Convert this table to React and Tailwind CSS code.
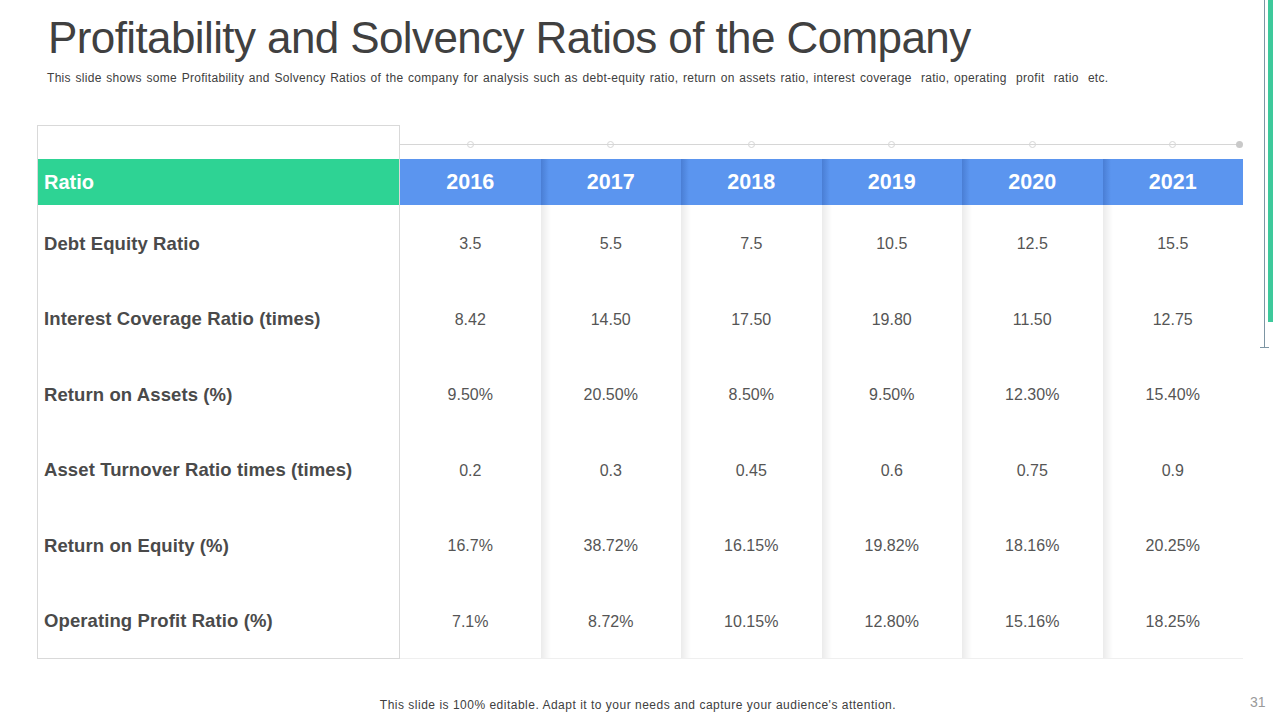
import React from "react";

const years = ["2016", "2017", "2018", "2019", "2020", "2021"];

const rows = [
    { label: "Debt Equity Ratio", values: ["3.5", "5.5", "7.5", "10.5", "12.5", "15.5"] },
    { label: "Interest Coverage Ratio (times)", values: ["8.42", "14.50", "17.50", "19.80", "11.50", "12.75"] },
    { label: "Return on Assets (%)", values: ["9.50%", "20.50%", "8.50%", "9.50%", "12.30%", "15.40%"] },
    { label: "Asset Turnover Ratio times (times)", values: ["0.2", "0.3", "0.45", "0.6", "0.75", "0.9"] },
    { label: "Return on Equity (%)", values: ["16.7%", "38.72%", "16.15%", "19.82%", "18.16%", "20.25%"] },
    { label: "Operating Profit Ratio (%)", values: ["7.1%", "8.72%", "10.15%", "12.80%", "15.16%", "18.25%"] },
];

const App = () => {
    return (
        <div className="relative w-[1280px] h-[720px] bg-white overflow-hidden font-['Liberation_Sans',Arial,sans-serif] text-[#404040]">
            {/* right edge decoration */}
            <div className="absolute top-0 left-[1264px] w-px h-[348px] bg-[#7d95a3]"></div>
            <div className="absolute top-[347px] left-[1260px] w-[9px] h-px bg-[#7d95a3]"></div>
            <div className="absolute top-0 left-[1268px] w-[5px] h-[322px] bg-[#3ec99b]"></div>

            <div className="pl-[48px] pt-[12px]">
                <h1 className="text-[44px] leading-[52px] tracking-[-0.6px]">Profitability and Solvency Ratios of the Company</h1>
                <p className="text-[12px] leading-[16px] -ml-px mt-[6px] tracking-[0.3px] [word-spacing:1px]">
                    This slide shows some Profitability and Solvency Ratios of the company for analysis such as debt-equity ratio, return on assets ratio, interest coverage&nbsp; ratio, operating&nbsp; profit&nbsp; ratio&nbsp; etc.
                </p>
            </div>

            <div className="flex ml-[37px] mt-[39px]">
                {/* left column */}
                <div className="w-[363px] border border-[#d9d9d9] flex flex-col">
                    <div className="h-[33px]"></div>
                    <div className="h-[46px] bg-[#2ed394] flex items-center pl-[6px] text-white font-bold text-[20px]">Ratio</div>
                    {rows.map((r) => (
                        <div key={r.label} className="h-[75.5px] flex items-center pl-[6px] pt-[2px] font-bold text-[18.5px] tracking-[0.1px] text-[#4a4a4a]">
                            {r.label}
                        </div>
                    ))}
                </div>

                {/* year columns */}
                <div className="flex flex-col w-[843px]">
                    <div className="relative h-[34px]">
                        <div className="absolute left-0 right-[3px] top-[19px] h-px bg-[#d6d6d6]"></div>
                        <div className="flex h-full">
                            {years.map((y) => (
                                <div key={y} className="flex-1 flex justify-center">
                                    <div className="mt-[16px] w-[7px] h-[7px] rounded-full border border-[#d6d6d6] bg-white"></div>
                                </div>
                            ))}
                        </div>
                        <div className="absolute right-0 top-[16px] w-[7px] h-[7px] rounded-full bg-[#c9c9c9]"></div>
                    </div>
                    <div className="flex">
                        {years.map((y, i) => (
                            <div key={y} className={`flex-1 flex flex-col ${i > 0 ? "bg-[linear-gradient(to_right,#ebebeb,#ffffff_10px)]" : "bg-white"}`}>
                                <div className={`h-[46px] flex items-center justify-center text-white font-bold text-[21.5px] ${i > 0 ? "bg-[linear-gradient(to_right,#4a7ed4,#5b95ef_8px)]" : "bg-[#5b95ef]"}`}>
                                    {y}
                                </div>
                                {rows.map((r) => (
                                    <div key={r.label} className="h-[75.5px] flex items-center justify-center pt-[3px] text-[16px] text-[#555555]">
                                        {r.values[i]}
                                    </div>
                                ))}
                                <div className="h-px bg-[#efefef]"></div>
                            </div>
                        ))}
                    </div>
                </div>
            </div>

            <p className="absolute left-0 right-0 top-[697px] text-center text-[12px] leading-[16px] tracking-[0.5px] pr-[4px]">
                This slide is 100% editable. Adapt it to your needs and capture your audience's attention.
            </p>
            <p className="absolute left-[1250px] top-[693px] text-[14px] leading-[18px] text-[#9a9a9a]">31</p>
        </div>
    );
};

export default App;
